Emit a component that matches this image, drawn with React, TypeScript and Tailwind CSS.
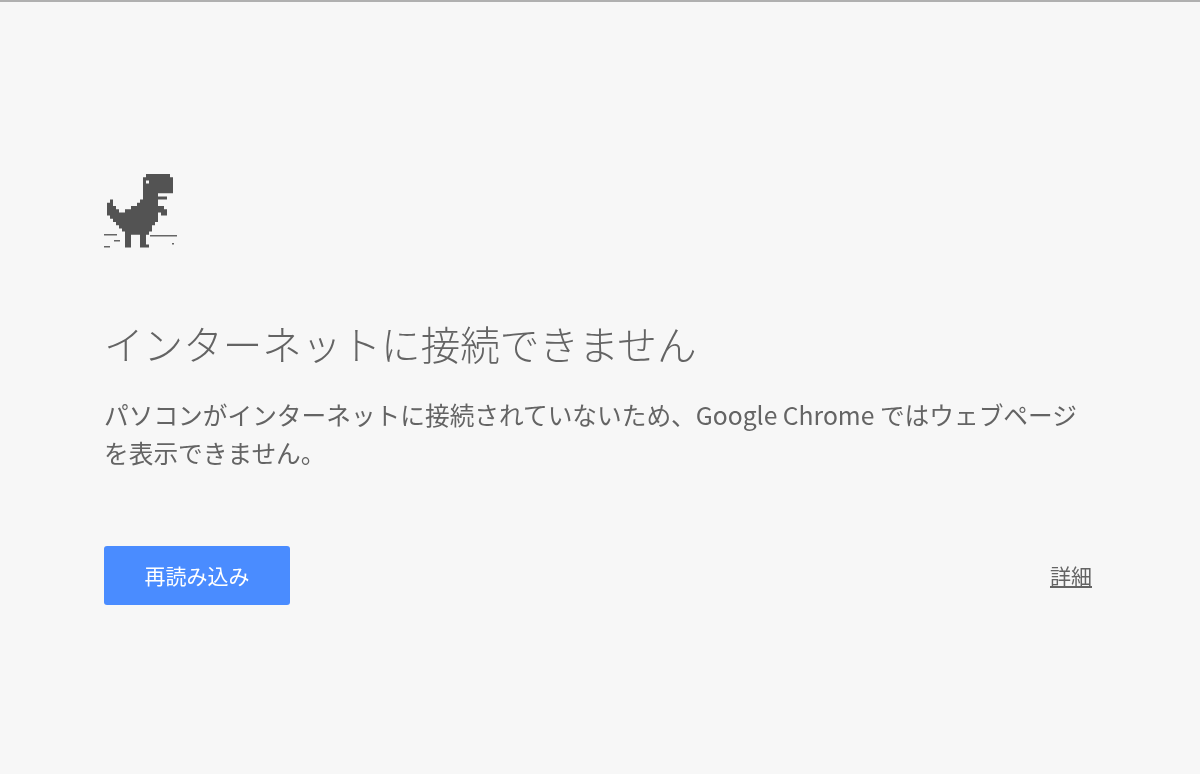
const DINO = [
  '.............########.',
  '............##########',
  '............#.########',
  '............##########',
  '............##########',
  '............##########',
  '............#####.....',
  '............########..',
  '.#.........######.....',
  '##........#######.....',
  '###.....###########...',
  '####..##############..',
  '#################.##..',
  '.################.....',
  '..###############.....',
  '...#############......',
  '....###########.......',
  '.....##########.......',
  '......########........',
  '......##...##.........',
  '......##...##.........',
  '......##...##.........',
  '......##...###........',
];

const GROUND = [
  [0, 60, 13],
  [10, 66, 6],
  [0, 72, 6],
  [46, 61, 27],
  [68, 69, 2],
];

// one path, so neighbouring pixels don't leave seams
const dinoPath = DINO.flatMap((row, y) =>
  row.split('').map((c, x) => (c === '#' ? `M${x * 3 + 3} ${y * 3.2}h3v3.2h-3z` : ''))
).join('');

function Dino() {
  return (
    <svg width="76" height="76" viewBox="0 0 76 76" className="block">
      <path d={dinoPath} fill="#535353" />
      {GROUND.map(([x, y, w], i) => (
        <rect key={i} x={x} y={y} width={w} height="1.5" fill="#666666" />
      ))}
    </svg>
  );
}

export default function App() {
  return (
    <div className="min-h-[774px] bg-[#f7f7f7] border-t-2 border-[#b0b0b0] text-[#646464] font-['Noto_Sans_CJK_JP','Noto_Sans',sans-serif]">
      <div className="pl-[104px] pr-[108px] pt-[172px] blur-[0.7px]">
        <Dino />

        <h1 className="mt-[66px] text-[39.6px] leading-[54px] font-light">インターネットに接続できません</h1>

        <p className="mt-[25px] text-[24.7px] leading-[38px]">
          パソコンがインターネットに接続されていないため、Google Chrome ではウェブページを表示できません。
        </p>

        <div className="mt-[75px] flex items-center justify-between">
          <button className="w-[186px] h-[59px] rounded-[3px] bg-[#4a8cff] text-white text-[21px]">再読み込み</button>
          <a className="text-[21px] underline">詳細</a>
        </div>
      </div>
    </div>
  );
}
